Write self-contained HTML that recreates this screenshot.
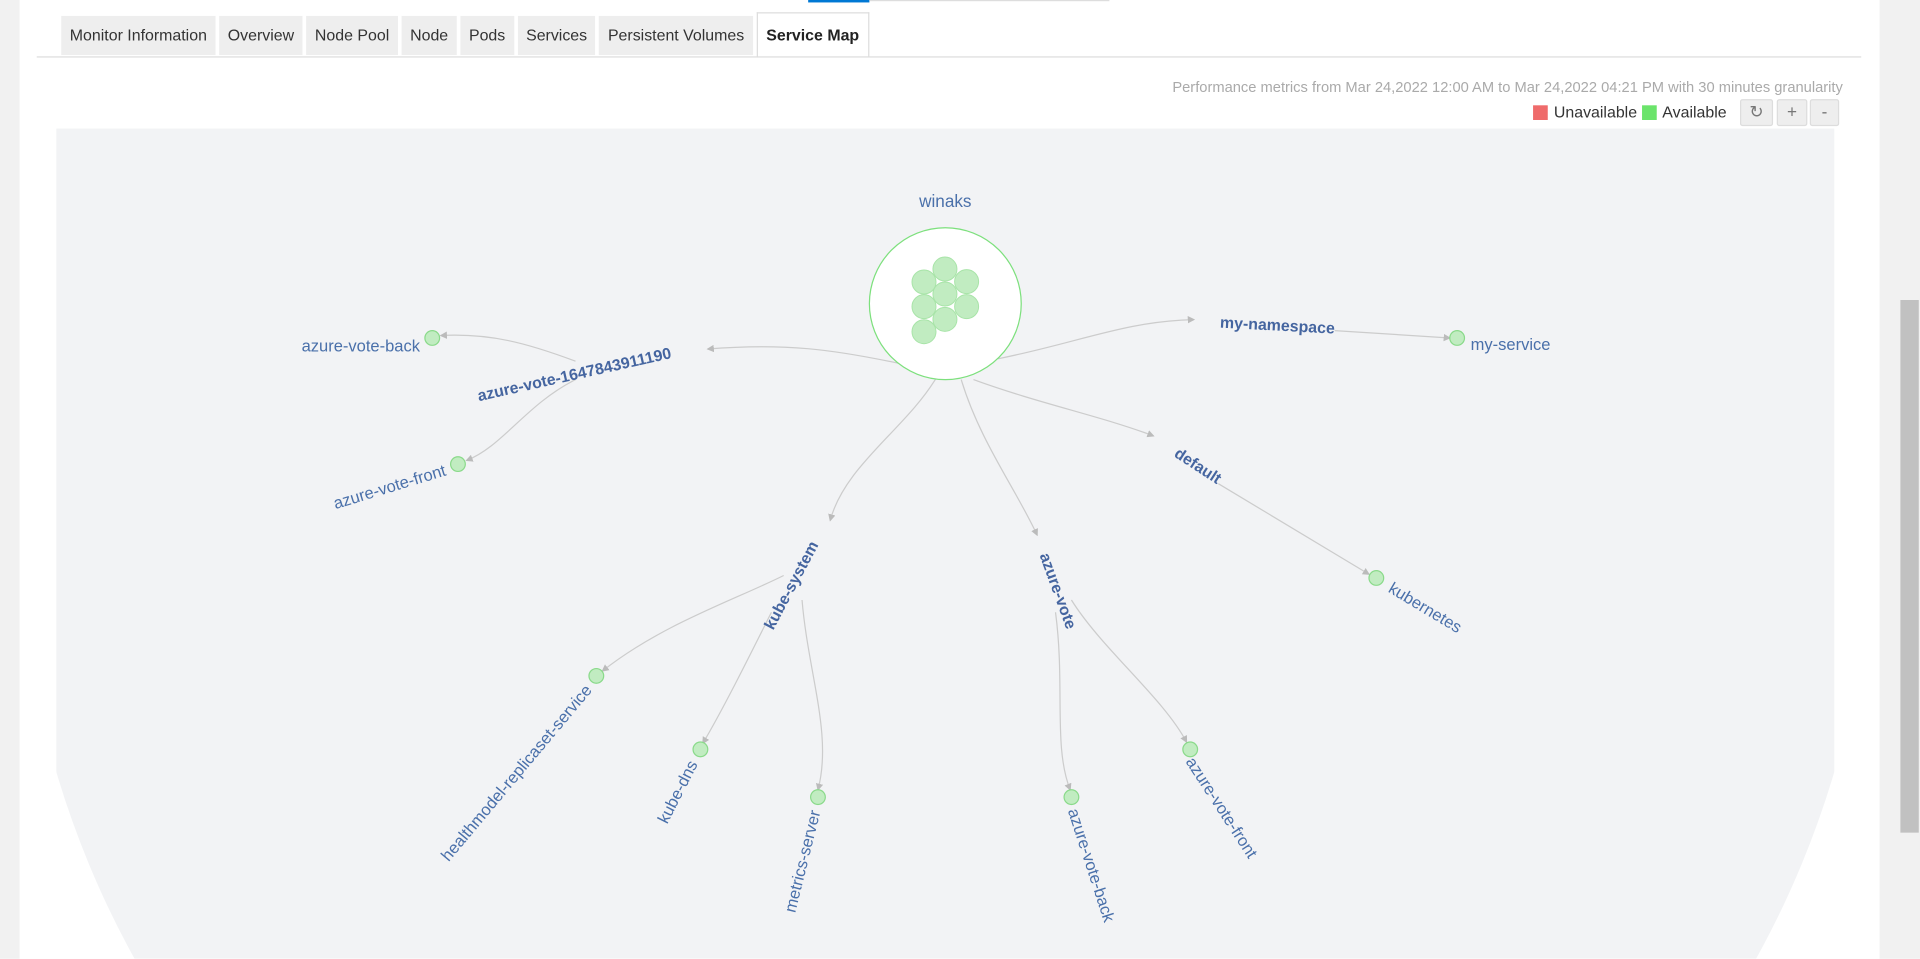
<!DOCTYPE html>
<html><head><meta charset="utf-8"><style>
html,body{margin:0;padding:0;width:1920px;height:959px;overflow:hidden;background:#fff}
#w{position:absolute;left:0;top:0;width:1568px;height:783px;transform:scale(1.22449);transform-origin:0 0;font-family:"Liberation Sans",sans-serif}
.lg{position:absolute;left:0;top:0;width:16px;height:783px;background:#f1f1f1}
.rg{position:absolute;left:1535px;top:0;width:33px;height:783px;background:#f1f1f1}
.thumb{position:absolute;left:1552px;top:245px;width:15px;height:435px;background:#c1c1c1}
.tabs{position:absolute;left:50px;top:13px;height:32px;display:flex;font-family:"Liberation Sans",sans-serif;font-size:13px;color:#333}
.tab{background:#eeeeee;padding:0 7px;line-height:32px;margin-right:3px;height:32px}
.tab.a{background:#fff;border:1px solid #ddd;border-bottom:none;font-weight:bold;margin-top:-3px;height:36px;line-height:36px;color:#222}
.tl{position:absolute;left:30px;top:46px;width:1490px;height:1px;background:#ddd}
.perf{position:absolute;right:63px;top:64px;font-size:12px;color:#aaa}
.leg{position:absolute;left:1252px;top:84px;font-size:13px;color:#333;display:flex;align-items:center}
.sq{width:12px;height:12px;display:inline-block;margin-right:5px}
.btn{position:absolute;top:81px;height:20px;background:#eee;border:1px solid #ddd;border-radius:2px;font-size:14px;color:#777;text-align:center;line-height:19px}
</style></head><body><div id="w">
<div class="lg"></div><div class="rg"></div><div class="thumb"></div>
<div style="position:absolute;left:660px;top:0;width:50px;height:2px;background:#0078d4"></div>
<div style="position:absolute;left:710px;top:0;width:196px;height:1px;background:#ddd"></div>
<div class="tabs"><div class="tab">Monitor Information</div><div class="tab">Overview</div><div class="tab">Node Pool</div><div class="tab">Node</div><div class="tab">Pods</div><div class="tab">Services</div><div class="tab">Persistent Volumes</div><div class="tab a">Service Map</div></div>
<div class="tl"></div>
<div class="perf">Performance metrics from Mar 24,2022 12:00 AM to Mar 24,2022 04:21 PM with 30 minutes granularity</div>
<div class="leg"><span class="sq" style="background:#ef6b6b"></span>Unavailable&nbsp;<span class="sq" style="background:#6be46b"></span>Available</div>
<div class="btn" style="left:1421px;width:25px">&#x21bb;</div>
<div class="btn" style="left:1451px;width:23px">+</div>
<div class="btn" style="left:1478px;width:22px">-</div>
<svg style="position:absolute;left:0;top:0" width="1568" height="783" font-family="Liberation Sans, sans-serif">
<defs><clipPath id="c"><circle cx="772" cy="416" r="757"/><rect x="0" y="0" width="1568" height="416"/></clipPath>
<marker id="m" markerWidth="6" markerHeight="6" refX="5" refY="3" orient="auto"><path d="M0,0L6,3L0,6z" fill="#bbb"/></marker></defs>
<rect x="46" y="105" width="1452" height="678" fill="#f2f3f5" clip-path="url(#c)"/>
<g fill="none" stroke="#ccc" stroke-width="1">
<path d="M815,293 C880,280 920,262 975,261" marker-end="url(#m)"/>
<path d="M1090,270 L1184,276" marker-end="url(#m)"/>
<path d="M740,298 C680,285 640,280 578,285" marker-end="url(#m)"/>
<path d="M470,295 C430,280 400,272 360,274" marker-end="url(#m)"/>
<path d="M470,310 C430,330 410,365 381,376" marker-end="url(#m)"/>
<path d="M795,310 C850,330 900,340 942,356" marker-end="url(#m)"/>
<path d="M995,395 L1118,469" marker-end="url(#m)"/>
<path d="M765,308 C740,350 690,380 678,425" marker-end="url(#m)"/>
<path d="M640,470 C600,490 540,510 492,548" marker-end="url(#m)"/>
<path d="M630,500 C610,540 590,580 574,607" marker-end="url(#m)"/>
<path d="M655,490 C660,550 680,600 668,645" marker-end="url(#m)"/>
<path d="M785,310 C800,360 830,400 847,437" marker-end="url(#m)"/>
<path d="M862,500 C870,560 860,610 874,645" marker-end="url(#m)"/>
<path d="M875,490 C900,530 950,570 969,606" marker-end="url(#m)"/>
</g>
<circle cx="772" cy="248" r="62" fill="#fff" stroke="#7de07d" stroke-width="1"/>
<g fill="#c1ecc1" stroke="#a8e4a8" stroke-width="0.8">
<circle cx="771.7" cy="219.7" r="9.8"/><circle cx="754.6" cy="230.3" r="9.8"/><circle cx="789.4" cy="230" r="9.8"/><circle cx="771.7" cy="240.1" r="9.8"/><circle cx="754.6" cy="250.4" r="9.8"/><circle cx="789.4" cy="250.4" r="9.8"/><circle cx="771.7" cy="260.8" r="9.8"/><circle cx="754.6" cy="270.9" r="9.8"/>
</g>
<text x="772" y="169" text-anchor="middle" font-size="14" fill="#4a70aa">winaks</text>
<g fill="#c1ecc1" stroke="#8ada8a" stroke-width="1">
<circle cx="1190" cy="276" r="6"/><circle cx="353" cy="276" r="6"/><circle cx="374" cy="379" r="6"/><circle cx="1124" cy="472" r="6"/><circle cx="487" cy="552" r="6"/><circle cx="572" cy="612" r="6"/><circle cx="668" cy="651" r="6"/><circle cx="875" cy="651" r="6"/><circle cx="972" cy="612" r="6"/>
</g>
<g font-size="13" font-weight="bold" fill="#4565a0" text-anchor="middle">
<text transform="translate(1043,270) rotate(3)">my-namespace</text>
<text transform="translate(470,310) rotate(-12.6)">azure-vote-1647843911190</text>
<text transform="translate(976,384) rotate(33)">default</text>
<text transform="translate(650,480) rotate(-62)">kube-system</text>
<text transform="translate(860,484) rotate(70)">azure-vote</text>
</g>
<g font-size="13.5" fill="#4a70aa">
<text x="1201" y="286">my-service</text>
<text x="343" y="287" text-anchor="end">azure-vote-back</text>
<text transform="translate(365,388) rotate(-17)" text-anchor="end">azure-vote-front</text>
<text transform="translate(1133,483) rotate(31)">kubernetes</text>
<text transform="translate(484,564) rotate(-50)" text-anchor="end">healthmodel-replicaset-service</text>
<text transform="translate(570,624) rotate(-63)" text-anchor="end">kube-dns</text>
<text transform="translate(670,663) rotate(-76)" text-anchor="end">metrics-server</text>
<text transform="translate(872,662) rotate(72)">azure-vote-back</text>
<text transform="translate(968,622) rotate(57)">azure-vote-front</text>
</g>
</svg>
</div></body></html>
